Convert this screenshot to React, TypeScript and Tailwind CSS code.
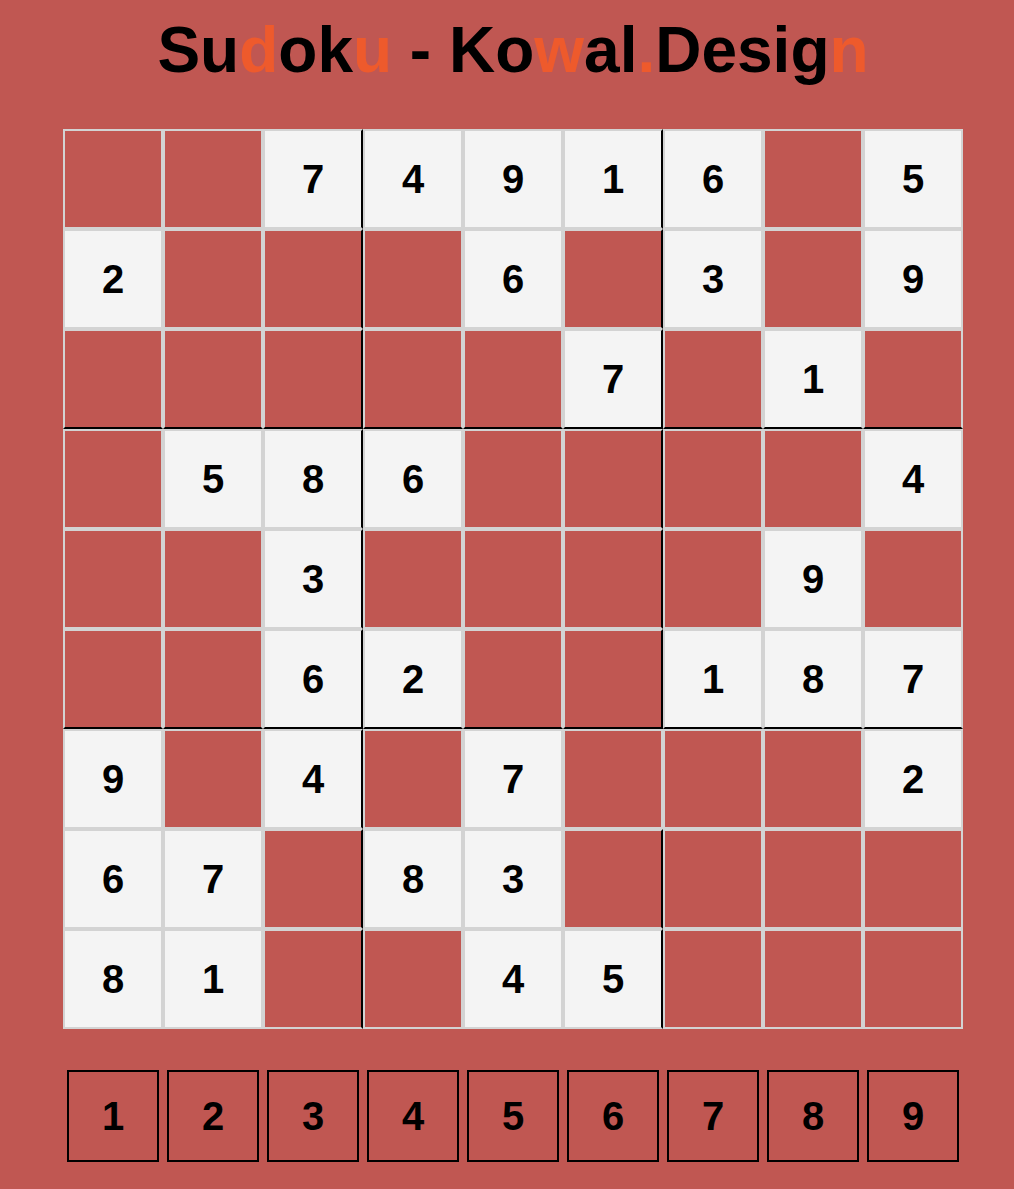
import React from "react";

const grid: (number | null)[][] = [
  [null, null, 7, 4, 9, 1, 6, null, 5],
  [2, null, null, null, 6, null, 3, null, 9],
  [null, null, null, null, null, 7, null, 1, null],
  [null, 5, 8, 6, null, null, null, null, 4],
  [null, null, 3, null, null, null, null, 9, null],
  [null, null, 6, 2, null, null, 1, 8, 7],
  [9, null, 4, null, 7, null, null, null, 2],
  [6, 7, null, 8, 3, null, null, null, null],
  [8, 1, null, null, 4, 5, null, null, null],
];

function Cell({ v, r, c }: { v: number | null; r: number; c: number }) {
  const blackRight = (c === 2 || c === 5) && !(r === 6 && c === 5);
  const right = blackRight ? "border-r-black" : "";
  const bottom = r === 2 || r === 5 ? "border-b-black" : "";
  const bg = v === null ? "bg-[#c05752]" : "bg-[#f4f4f4]";
  return (
    <div
      className={`w-[100px] h-[100px] box-border border-2 border-[#d3d3d3] ${right} ${bottom} ${bg} flex items-center justify-center text-[40px] font-bold text-black leading-none`}
    >
      {v ?? ""}
    </div>
  );
}

export default function App() {
  const O = "text-[#ee5a2c]";
  return (
    <div
      className="min-h-screen bg-[#c05752] pt-[18px]"
      style={{ fontFamily: '"Liberation Sans", Arial, sans-serif' }}
    >
      <div className="w-[900px] ml-[63px]">
        <h1 className="text-[64px] leading-[64px] font-bold text-center text-black whitespace-nowrap">
          Su<span className={O}>d</span>ok<span className={O}>u</span> - Ko
          <span className={O}>w</span>al<span className={O}>.</span>Desig
          <span className={O}>n</span>
        </h1>
        <div className="mt-[47px] grid grid-cols-9 w-[900px]">
          {grid.map((row, r) =>
            row.map((v, c) => <Cell key={`${r}-${c}`} v={v} r={r} c={c} />)
          )}
        </div>
        <div className="mt-[41px] pl-[4px] flex gap-[8px]">
          {[1, 2, 3, 4, 5, 6, 7, 8, 9].map((n) => (
            <button
              key={n}
              className="w-[92px] h-[92px] box-border border-2 border-black bg-transparent flex items-center justify-center text-[40px] font-bold text-black leading-none"
            >
              {n}
            </button>
          ))}
        </div>
      </div>
    </div>
  );
}
